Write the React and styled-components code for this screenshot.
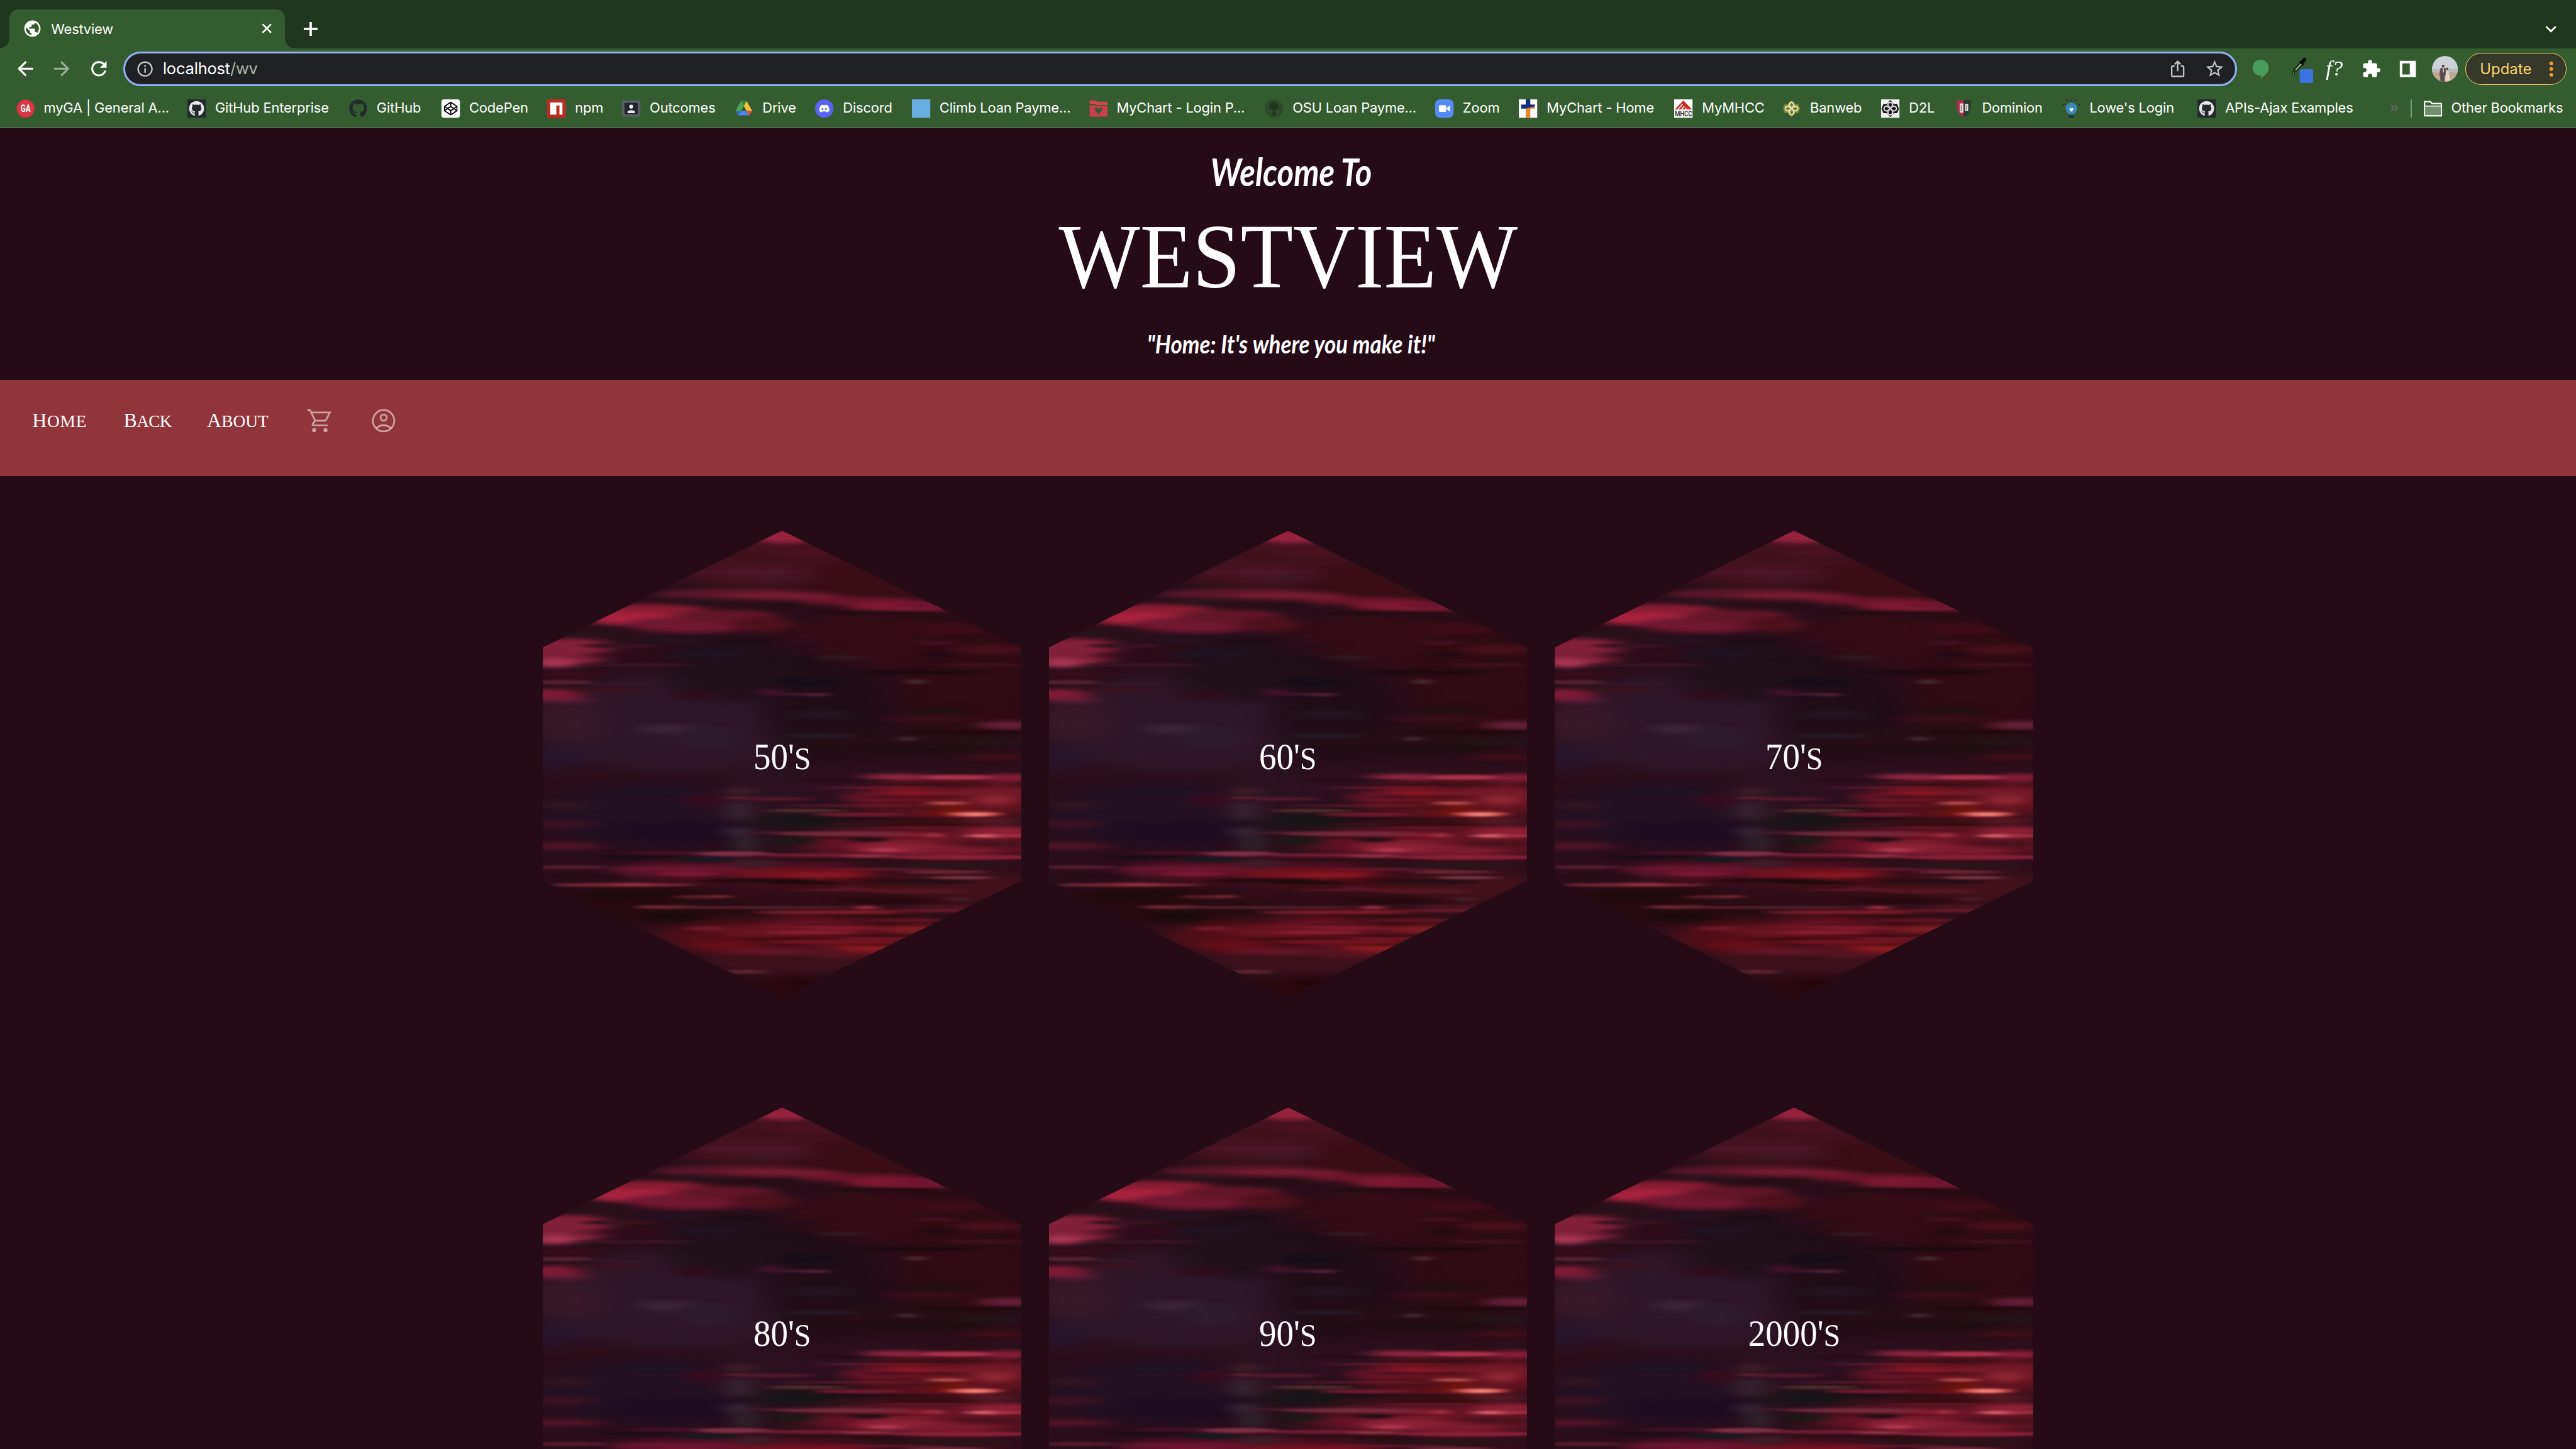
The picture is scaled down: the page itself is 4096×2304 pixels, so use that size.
import React from "react";
import styled, { createGlobalStyle } from "styled-components";
import {
  MdArrowBack,
  MdArrowForward,
  MdRefresh,
  MdInfoOutline,
  MdStarOutline,
  MdExtension,
  MdPublic,
} from "react-icons/md";
import { FaGithub, FaCodepen, FaDiscord } from "react-icons/fa";

const GlobalStyle = createGlobalStyle`
  *, *::before, *::after { box-sizing: border-box; }
  html, body { margin: 0; background: #250b16; overflow: hidden; }
`;

const ui = `Inter, Roboto, "Liberation Sans", sans-serif`;
const roman = `"Liberation Serif", "Times New Roman", serif`;
const script = `Lato, "Open Sans", sans-serif`;

const Page = styled.div`
  zoom: 1.8285714;
  width: 2240px;
  height: 1260px;
  overflow: hidden;
  display: flex;
  flex-direction: column;
  background: #250b16;
  color: #fff;
  font-family: ${ui};
`;

/* ---------- browser frame ---------- */

const TabStrip = styled.div`
  flex: none;
  height: 42px;
  padding: 8px 0 0 8px;
  display: flex;
  background: #21361e;
`;

const Tab = styled.div`
  position: relative;
  width: 240px;
  height: 34px;
  padding: 0 11.5px 0 11.5px;
  display: flex;
  align-items: center;
  gap: 8px;
  background: #355c30;
  border-radius: 8px 8px 0 0;
  font-size: 12px;
  line-height: 34px;

  &::before,
  &::after {
    content: "";
    position: absolute;
    bottom: 0;
    width: 8px;
    height: 8px;
  }
  &::before {
    left: -8px;
    background: radial-gradient(circle at 0 0, transparent 7.7px, #355c30 8.2px);
  }
  &::after {
    right: -8px;
    background: radial-gradient(circle at 100% 0, transparent 7.7px, #355c30 8.2px);
  }
`;

const TabTitle = styled.span`
  flex: 1;
  letter-spacing: -0.13px;
`;

const StripButton = styled.div`
  width: 28px;
  height: 34px;
  margin-left: ${(p) => p.$left || "0"};
  margin-right: ${(p) => p.$right || "0"};
  display: flex;
  align-items: center;
  justify-content: center;
`;

const Toolbar = styled.div`
  flex: none;
  height: 36px;
  padding: 0 8px 0 6px;
  display: flex;
  align-items: center;
  background: #355c30;
`;

const ToolSlot = styled.div`
  flex: none;
  width: 32px;
  height: 32px;
  display: flex;
  align-items: center;
  justify-content: center;
  opacity: ${(p) => (p.$dim ? 0.5 : 1)};
`;

const Omnibox = styled.div`
  width: 1838px;
  height: 30px;
  margin: 0 5px;
  padding: 0 9.5px;
  display: flex;
  align-items: center;
  background: #202124;
  border: 2px solid #93b1f5;
  border-radius: 15px;
  color: #c4c5c7;
`;

const Address = styled.span`
  flex: 1;
  margin-left: 7.5px;
  font-size: 14px;
  line-height: 20px;
  letter-spacing: -0.14px;
  color: #a9b5a6;
`;

const Host = styled.span`
  color: #fff;
`;

const OmniSlot = styled.div`
  width: 32px;
  display: flex;
  justify-content: center;
  margin-right: ${(p) => p.$right || "0"};
`;

const UpdateButton = styled.div`
  flex: none;
  width: 88px;
  height: 28px;
  margin-left: 2px;
  padding: 0 11px 0 12px;
  display: flex;
  align-items: center;
  justify-content: space-between;
  border: 1px solid #f9d56e;
  border-radius: 14px;
  background: #36382a;
  color: #f9d56e;
  font-size: 13px;
  letter-spacing: 0.05px;
`;

const BookmarkBar = styled.div`
  flex: none;
  height: 33px;
  padding: 0 0 0 14px;
  display: flex;
  align-items: center;
  background: #355c30;
  border-bottom: 1px solid #5f7f5f;
`;

const BookmarkItem = styled.div`
  flex: none;
  width: ${(p) => p.$width}px;
  display: flex;
  align-items: center;
  gap: 8px;
  font-size: 12px;
  line-height: 16px;
  white-space: nowrap;
  letter-spacing: -0.1px;

  & > svg {
    flex: none;
  }
`;

const BookmarkLabel = styled.span`
  padding-bottom: 1px;
`;

const Divider = styled.div`
  width: 1px;
  height: 16px;
  margin-right: 10px;
  background: #7b967a;
`;

/* ---------- page header ---------- */

const Banner = styled.header`
  flex: none;
  height: 219.5px;
  display: flex;
  flex-direction: column;
  align-items: center;
  white-space: nowrap;
`;

const Brush = styled.div`
  height: ${(p) => p.$height}px;
  line-height: ${(p) => p.$height}px;
  margin-top: ${(p) => p.$top}px;
  font-family: ${script};
  font-weight: 700;
  font-style: italic;
  font-size: ${(p) => p.$size}px;
  transform: translateX(${(p) => p.$shift || 0}px) scaleX(${(p) => p.$squeeze});
`;

const Title = styled.h1`
  margin: 0;
  height: 90px;
  line-height: 90px;
  margin-top: ${(p) => p.$top}px;
  font-family: ${roman};
  font-weight: 400;
  font-size: 80.5px;
  transform: scaleX(0.93);
`;

const NavBar = styled.nav`
  flex: none;
  height: 83.5px;
  padding: 23.5px 0 0 28px;
  display: flex;
  align-items: flex-start;
  background: #91353d;
`;

const NavLink = styled.a`
  display: block;
  width: ${(p) => p.$width}px;
  height: 24px;
  line-height: 24px;
  font-family: ${roman};
  font-size: 15px;
  letter-spacing: ${(p) => p.$track || 0}px;
  text-transform: uppercase;

  &::first-letter {
    font-size: 17.5px;
  }
`;

const NavIcon = styled.span`
  width: 56.5px;
  height: 24px;
  color: rgba(255, 255, 255, 0.54);
`;

/* ---------- decade tiles ---------- */

const Decades = styled.main`
  display: grid;
  grid-template-columns: repeat(3, 416px);
  grid-auto-rows: 406px;
  gap: 95.5px 24px;
  justify-content: center;
  padding-top: 47.5px;
`;

const Hexagon = styled.div`
  display: grid;
  place-items: center;
  clip-path: polygon(50% 0, 100% 25%, 100% 75%, 50% 100%, 0 75%, 0 25%);
  background: #280c18;

  & > * {
    grid-area: 1 / 1;
  }
`;

const Decade = styled.div`
  position: relative;
  margin-top: -11px;
  font-family: ${roman};
  font-size: 32px;
  line-height: 40px;
  text-transform: uppercase;
  transform: scaleX(0.94);
`;

const Suffix = styled.span`
  font-size: 28px;
`;

/* cx, cy, rx, ry, colour */
const washes = [
  [1248, 150, 700, 160, "#43111f"],
  [1800, 260, 500, 120, "#390d16"],
  [700, 1000, 750, 260, "#2d1627"],
  [1050, 720, 420, 170, "#21101a"],
  [1850, 560, 600, 130, "#340c16"],
  [2250, 800, 380, 300, "#2f0b13"],
  [1500, 950, 330, 260, "#200d17"],
  [1900, 1100, 500, 80, "#250e15"],
  [120, 1000, 160, 100, "#391a28"],
  [60, 1180, 150, 70, "#27152c"],
  [600, 1480, 650, 170, "#231122"],
  [750, 1570, 420, 60, "#1d0c21"],
  [1150, 1400, 220, 180, "#2b1220"],
  [1500, 1330, 260, 80, "#2c1020"],
  [2150, 1400, 520, 110, "#651320"],
  [2000, 1630, 660, 90, "#651426"],
  [1350, 1520, 260, 50, "#1d1518"],
  [1100, 1780, 700, 60, "#531022"],
  [1650, 1850, 500, 60, "#420c15"],
  [2200, 1860, 400, 90, "#42101b"],
  [600, 1950, 600, 100, "#260b10"],
  [1300, 1910, 500, 40, "#300c17"],
  [1000, 2120, 400, 90, "#520e18"],
  [1600, 2100, 500, 130, "#59101c"],
  [1300, 2250, 500, 60, "#3c111b"],
  [1400, 2390, 500, 60, "#2a0a0f"],
];

const streaks = [
  [1270, 30, 190, 36, "#96223f"],
  [1150, 130, 180, 22, "#3c0f18"],
  [1330, 110, 160, 22, "#4c1120"],
  [1100, 215, 300, 18, "#51152a"],
  [1230, 250, 220, 14, "#3d1825"],
  [1000, 330, 420, 26, "#5c162a"],
  [1250, 340, 320, 20, "#751b31"],
  [820, 368, 200, 14, "#26131a"],
  [1230, 390, 330, 16, "#270d14"],
  [1650, 368, 320, 20, "#6c152c"],
  [1900, 395, 320, 28, "#7d1833"],
  [2000, 388, 160, 12, "#6c1530"],
  [1770, 430, 330, 9, "#230b10"],
  [2060, 455, 200, 14, "#260c12"],
  [560, 440, 360, 58, "#8a1c33"],
  [480, 460, 260, 34, "#a8223f"],
  [780, 490, 340, 42, "#701731"],
  [950, 445, 270, 34, "#621629"],
  [1150, 490, 160, 40, "#4e101c"],
  [300, 545, 220, 16, "#271217"],
  [660, 570, 200, 16, "#241220"],
  [130, 605, 240, 44, "#841f39"],
  [120, 650, 230, 56, "#80203a"],
  [60, 690, 120, 24, "#ac3655"],
  [400, 600, 200, 12, "#37131f"],
  [450, 650, 240, 14, "#300b19"],
  [480, 700, 300, 10, "#381522"],
  [130, 750, 180, 14, "#3a0d18"],
  [100, 790, 160, 12, "#582030"],
  [40, 855, 170, 30, "#7f1b35"],
  [110, 885, 160, 14, "#641c36"],
  [320, 830, 200, 14, "#3a111c"],
  [420, 800, 180, 8, "#321827"],
  [860, 640, 200, 26, "#201221"],
  [1040, 580, 120, 12, "#1c0c14"],
  [800, 855, 110, 22, "#2d0c19"],
  [650, 1035, 140, 28, "#3b2635"],
  [850, 1080, 160, 60, "#2e1b2b"],
  [1190, 843, 46, 15, "#64173a"],
  [1350, 853, 150, 8, "#3e1830"],
  [1430, 855, 66, 8, "#55253e"],
  [1380, 790, 170, 20, "#150e1a"],
  [1300, 680, 200, 16, "#1d0e18"],
  [1560, 660, 120, 12, "#2f1920"],
  [1330, 600, 160, 16, "#270d1b"],
  [1950, 787, 50, 12, "#4c2c35"],
  [1900, 1085, 50, 12, "#3d2a31"],
  [1950, 738, 320, 12, "#1c0b10"],
  [2060, 645, 70, 12, "#1f0c14"],
  [2340, 668, 60, 14, "#240c15"],
  [2150, 515, 180, 24, "#400b18"],
  [2330, 620, 190, 26, "#480e1b"],
  [2050, 585, 110, 12, "#401120"],
  [2300, 700, 210, 10, "#3f101e"],
  [2060, 935, 160, 16, "#1d1214"],
  [2000, 980, 240, 14, "#3a0e1c"],
  [2430, 1015, 160, 22, "#68203a"],
  [2250, 1050, 320, 10, "#210a0f"],
  [2360, 1100, 230, 18, "#221417"],
  [2000, 1140, 340, 14, "#1c0e12"],
  [2380, 1180, 180, 16, "#430d17"],
  [1450, 960, 200, 26, "#221420"],
  [1450, 1070, 200, 12, "#251925"],
  [580, 1360, 220, 12, "#1d1620"],
  [120, 1430, 140, 20, "#321520"],
  [100, 1530, 160, 24, "#3a1222"],
  [850, 1400, 110, 36, "#360c1e"],
  [1030, 1360, 60, 24, "#44202a"],
  [1020, 1460, 66, 50, "#362530"],
  [1020, 1570, 66, 24, "#3b2a38"],
  [1060, 1630, 60, 50, "#32262e"],
  [1030, 1395, 75, 8, "#722936"],
  [1200, 1398, 220, 9, "#55172b"],
  [1240, 1575, 200, 7, "#451b2a"],
  [1380, 1460, 220, 8, "#54302f"],
  [1650, 1480, 240, 10, "#731b30"],
  [1340, 1510, 180, 22, "#171517"],
  [1650, 1530, 160, 10, "#361019"],
  [1570, 1580, 360, 11, "#742b3d"],
  [1300, 1620, 120, 20, "#191a17"],
  [1700, 1612, 100, 10, "#1d1116"],
  [100, 1645, 220, 20, "#501225"],
  [750, 1680, 320, 8, "#4a1029"],
  [1000, 1685, 200, 13, "#802e47"],
  [500, 1703, 220, 9, "#180e18"],
  [850, 1715, 160, 12, "#121c21"],
  [1100, 1735, 100, 22, "#3d202a"],
  [150, 1755, 200, 10, "#581a2b"],
  [700, 1765, 350, 20, "#6b1631"],
  [760, 1790, 180, 12, "#7a1838"],
  [520, 1790, 100, 14, "#50142b"],
  [200, 1805, 220, 10, "#260c15"],
  [1100, 1825, 300, 12, "#250a10"],
  [420, 1847, 380, 10, "#7c2737"],
  [470, 1845, 120, 8, "#983141"],
  [450, 1895, 250, 24, "#1e0c0d"],
  [830, 1910, 150, 9, "#5b1f28"],
  [930, 1908, 60, 7, "#7d2835"],
  [650, 1963, 170, 9, "#7a2a39"],
  [1100, 1965, 500, 7, "#562030"],
  [680, 2015, 160, 24, "#190b0c"],
  [1850, 1285, 190, 14, "#a42b4b"],
  [2160, 1286, 190, 13, "#ae314f"],
  [2430, 1288, 150, 20, "#8a1f39"],
  [2050, 1325, 300, 16, "#3a0e14"],
  [1900, 1372, 150, 26, "#861726"],
  [2300, 1370, 260, 34, "#721929"],
  [1720, 1390, 150, 24, "#68162b"],
  [2110, 1421, 105, 9, "#b44e4d"],
  [2360, 1406, 90, 24, "#932937"],
  [2100, 1455, 110, 24, "#741409"],
  [2250, 1478, 140, 13, "#d65656"],
  [2255, 1480, 70, 9, "#f58880"],
  [1900, 1440, 200, 24, "#4c111b"],
  [2050, 1530, 330, 20, "#360c10"],
  [2350, 1515, 160, 14, "#5c1b27"],
  [2400, 1565, 220, 20, "#902138"],
  [2330, 1591, 125, 10, "#da5b6b"],
  [2440, 1590, 90, 10, "#a62d42"],
  [2040, 1588, 40, 11, "#a93546"],
  [1920, 1600, 170, 22, "#881b30"],
  [1800, 1655, 180, 28, "#912239"],
  [1780, 1665, 90, 10, "#b03850"],
  [1970, 1660, 130, 26, "#92233a"],
  [2150, 1665, 220, 24, "#7c1b30"],
  [1380, 1692, 280, 8, "#771e35"],
  [1690, 1696, 140, 7, "#983649"],
  [2200, 1703, 400, 12, "#8a2039"],
  [2350, 1635, 220, 16, "#46111b"],
  [1800, 1735, 220, 14, "#270f14"],
  [2150, 1745, 300, 20, "#2a1319"],
  [2100, 1780, 220, 8, "#712a3a"],
  [2180, 1810, 170, 7, "#7f3c4d"],
  [1350, 1790, 370, 28, "#761320"],
  [1450, 1795, 200, 12, "#831823"],
  [1350, 1835, 200, 8, "#1d0a0c"],
  [1980, 1832, 280, 10, "#270d13"],
  [1950, 1880, 260, 12, "#55151f"],
  [1600, 1865, 70, 12, "#54152a"],
  [1800, 1925, 260, 14, "#250a0e"],
  [2170, 1922, 50, 9, "#43252d"],
  [2100, 1970, 200, 20, "#501420"],
  [1690, 1965, 60, 8, "#a8364a"],
  [1480, 1990, 380, 9, "#7b1d2b"],
  [1750, 2025, 200, 18, "#350c13"],
  [1430, 2065, 320, 20, "#811b2e"],
  [1400, 2095, 240, 9, "#8a1e31"],
  [1950, 2080, 160, 22, "#761e21"],
  [1150, 2090, 260, 30, "#661420"],
  [850, 2075, 100, 12, "#6f1a2c"],
  [1300, 2130, 300, 8, "#430a10"],
  [1500, 2145, 330, 12, "#701521"],
  [1720, 2175, 190, 28, "#8a1820"],
  [1000, 2165, 200, 34, "#640f1a"],
  [1250, 2150, 150, 16, "#3f0d14"],
  [1200, 2195, 240, 14, "#65182c"],
  [1550, 2210, 180, 18, "#561322"],
  [1060, 2300, 110, 12, "#5d222d"],
  [1350, 2355, 60, 20, "#220509"],
];

const softStreaks = streaks.filter((s) => s[3] >= 14);
const fineStreaks = streaks.filter((s) => s[3] < 14);

const grainRows = [1302, 1340, 1388, 1434, 1502, 1548, 1604, 1646, 1718, 1766, 1822, 1874, 1938, 1982, 2008, 2032, 2054, 2078, 2112, 2128, 2160, 2184];

const drawEllipse = ([cx, cy, rx, ry, c], i) => (
  <ellipse key={i} cx={cx} cy={cy} rx={rx} ry={ry} fill={c} />
);

function Reflection({ id }) {
  return (
    <svg width="416" height="406" viewBox="0 0 2496 2436" preserveAspectRatio="none">
      <defs>
        <filter id={`${id}-wide`} x="-50%" y="-50%" width="200%" height="200%" colorInterpolationFilters="sRGB">
          <feGaussianBlur stdDeviation="85 26" />
        </filter>
        <filter id={`${id}-soft`} x="-10%" y="-10%" width="120%" height="120%" colorInterpolationFilters="sRGB">
          <feGaussianBlur stdDeviation="52 11" />
        </filter>
        <filter id={`${id}-fine`} x="-10%" y="-10%" width="120%" height="120%" colorInterpolationFilters="sRGB">
          <feGaussianBlur stdDeviation="34 5.500" />
        </filter>
      </defs>
      <rect width="2496" height="2436" fill="#2a0e1a" />
      <g filter={`url(#${id}-wide)`}>{washes.map(drawEllipse)}</g>
      <g filter={`url(#${id}-soft)`}>{softStreaks.map(drawEllipse)}</g>
      <g filter={`url(#${id}-fine)`}>
        {grainRows.map((y, i) => (
          <ellipse
            key={`g${y}`}
            cx={1750 + ((i * 173) % 460) - 150}
            cy={y}
            rx={280 + ((i * 97) % 160)}
            ry="5"
            fill={i % 2 ? "#8c2138" : "#1c070b"}
            opacity="0.55"
          />
        ))}
        {fineStreaks.map(drawEllipse)}
      </g>
    </svg>
  );
}

/* ---------- small drawings ---------- */

const Svg = ({ children, size = 16, box = 16 }) => (
  <svg width={size} height={size} viewBox={`0 0 ${box} ${box}`} fill="none" overflow="visible">
    {children}
  </svg>
);

const GaIcon = () => (
  <Svg>
    <circle cx="8" cy="8" r="7.4" fill="#dc3545" />
    <circle cx="8" cy="8" r="7.5" stroke="#dc3545" strokeWidth="1" strokeDasharray="1 .6" />
    <text x="8" y="11.2" textAnchor="middle" fontFamily="Roboto, sans-serif" fontWeight="700" fontSize="9" fill="#fff" textLength="8.6" lengthAdjust="spacingAndGlyphs">GA</text>
  </Svg>
);

const OctoTile = () => (
  <Svg>
    <rect width="16" height="16" rx="1" fill="#24292e" />
    <FaGithub x="1.3" y="1.3" size={13.4} color="#e9e9e9" />
  </Svg>
);

const OctoIcon = () => <FaGithub size={16} color="#24292f" />;

const CodePenIcon = () => (
  <Svg>
    <rect width="16" height="16" rx="2" fill="#fff" />
    <FaCodepen x="2" y="2" size={12} color="#0b0b0b" />
  </Svg>
);

const NpmIcon = () => (
  <Svg>
    <rect width="16" height="16" fill="#bf2a1e" />
    <path d="M2.7 2.7h10.6v10.6h-2.6V5.4H8v7.9H2.7z" fill="#fff" />
  </Svg>
);

const OutcomesIcon = () => (
  <Svg>
    <rect y="1" width="16" height="14" rx="1" fill="#5b6068" />
    <rect x="2.2" y="3" width="11.6" height="10" fill="#22252b" />
    <circle cx="8" cy="6.3" r="1.7" fill="#fff" />
    <path d="M4.8 12V10.7Q5 9.5 8 9.4q3 .1 3.200 1.300V12z" fill="#e8e8e8" />
  </Svg>
);

const DriveIcon = () => (
  <Svg>
    <path d="M5.500 1.500h5L3.300 14 .8 10.100z" fill="#4ca556" />
    <path d="M5.500 1.500h5l4.900 8.600h-4.900z" fill="#f4c034" />
    <path d="M5.500 1.500h5L8 5.900z" fill="#2f8745" />
    <path d="M8 6l2.400 4.100H5.600z" fill="#355c30" />
    <path d="M.8 10.100h4.800L3.300 14z" fill="#2f68d4" />
    <path d="M5.600 10.100h4.900l2.200 3.900H3.300z" fill="#4d85ee" />
    <path d="M10.500 10.100h4.900L12.700 14z" fill="#e5493a" />
  </Svg>
);

const DiscordIcon = () => (
  <Svg>
    <circle cx="8" cy="8" r="8" fill="#5865f2" />
    <FaDiscord x="3.200" y="3.200" size={9.600} color="#fff" />
  </Svg>
);

const ClimbIcon = () => (
  <Svg>
    <rect width="16" height="16" fill="#68aee0" />
  </Svg>
);

const ChartFolderIcon = () => (
  <Svg>
    <path d="M.3 1h5.800l.7 1h9v3H6.400L5.600 4H.3z" fill="#d5434f" />
    <path d="M.3 5h5l.8 1h9.700v8.500q0 .5-.5.500H.8q-.5 0-.5-.5z" fill="#c93f4d" />
    <path d="M8 12.800L5.200 9.700Q4.300 8 5.900 7.300 7.200 7 8 8.300q.8-1.300 2.100-1 1.600.7.700 2.400z" fill="#355c30" />
  </Svg>
);

const OsuIcon = () => (
  <Svg>
    <circle cx="8" cy="8" r="8" fill="#2d4a2b" />
    <path d="M8 2.500q4 .5 4.200 4-.4 2.600-3.500 3L9 13l1.500.8h-5L7 13l.2-3.500Q4 9 3.800 6.500q.2-3.500 4.200-4z" fill="#213420" />
  </Svg>
);

const ZoomIcon = () => (
  <Svg>
    <rect width="16" height="16" rx="4" fill="#548bf6" />
    <rect x="3.200" y="5" width="6.500" height="6" rx="1.300" fill="#fff" />
    <path d="M10.300 7.200L13 5.300v5.400l-2.700-1.900z" fill="#fff" />
  </Svg>
);

const CrossIcon = () => (
  <Svg>
    <rect width="16" height="16" fill="#fff" />
    <path d="M6 0h4v4.500h4V7L9.500 8H2V4.500h4z" fill="#13317f" />
    <path d="M6 8.500L10 7l4-.8V8h-4v8H6z" fill="#e8862c" />
  </Svg>
);

const MhccIcon = () => (
  <Svg>
    <rect width="16" height="16" fill="#fff" />
    <path d="M.5 8.800L8 1l7.500 7.800z" fill="#cf2a24" />
    <path d="M3 9l4.500-5M6.300 9l2.400-3M9.500 9l.9-1.500" stroke="#fff" strokeWidth=".9" />
    <text x="8" y="15" textAnchor="middle" fontFamily="Roboto, sans-serif" fontWeight="700" fontSize="6.500" fill="#444" textLength="15" lengthAdjust="spacingAndGlyphs">MHCC</text>
  </Svg>
);

const Knot = ({ stroke, back }) => (
  <>
    <path d="M8 .5l3 3.500h3l1.500 4L14 12h-3l-3 3.500L5 12H2L.5 8 2 4h3z" fill={back} />
    <path d="M8 13.500Q5.500 13 6 10.500L9.900 5.500Q10.500 3 8 2.500 5.700 3 6 5.300L10 10.300M2.500 8Q3 5.700 5.300 6l5.200 4q2.500.3 3-2-.5-2.300-3-2L5.500 10.100Q3 10.300 2.500 8M10 10.400q.3 2.600-2 3.100" stroke={stroke} strokeWidth="1.200" />
  </>
);

const BanwebIcon = () => (
  <Svg>
    <Knot stroke="#e3e4b6" back="#7d8430" />
  </Svg>
);

const D2lIcon = () => (
  <Svg>
    <rect width="16" height="16" fill="#f2f2f2" />
    <Knot stroke="#d6d6d6" back="#151515" />
  </Svg>
);

const DominionIcon = () => (
  <Svg>
    <path d="M1.500.5H8v15Q3 13.500 2.300 8z" fill="#a8304a" />
    <path d="M8 .5h6.500L13.700 8Q13 13.500 8 15.500z" fill="#2b3a33" />
    <path d="M4.500 3.500h3v8h-3zM9 4h2.800v6H9z" fill="#e5e1e0" />
    <path d="M5.700 5v5M10.400 5v4" stroke="#6d6466" strokeWidth=".7" />
  </Svg>
);

const BulbIcon = () => (
  <Svg>
    <path d="M8 3Q13 3.300 13 8q-.5 3-3 4.800H6Q3.500 11 3 8q0-4.700 5-5z" fill="#3c88ba" />
    <path d="M6.200 7.800h3.600L8.700 10.500H7.300z" fill="#fff" />
    <rect x="6" y="14" width="4" height="2" fill="#12304a" />
    <path d="M3.800 0l.8 1.400M7.900 0v1.200M12.200 0l-.8 1.400M.5 4.300l1.300.8M15.500 4.300l-1.300.8" stroke="#12304a" strokeWidth="1.200" />
  </Svg>
);

const FolderIcon = () => (
  <Svg>
    <path d="M.7 2h5l1.400 1.600h8.200v10.700H.7z" fill="#355c30" stroke="#fff" strokeWidth="1.200" />
    <rect x="1.300" y="6" width="13.400" height="7.700" fill="#718f6e" />
    <path d="M.7 5.800h14.600" stroke="#fff" strokeWidth=".9" />
  </Svg>
);

const bookmarks = [
  ["myGA | General A...", GaIcon, 149],
  ["GitHub Enterprise", OctoTile, 140.5],
  ["GitHub", OctoIcon, 80.5],
  ["CodePen", CodePenIcon, 92],
  ["npm", NpmIcon, 65],
  ["Outcomes", OutcomesIcon, 98],
  ["Drive", DriveIcon, 70],
  ["Discord", DiscordIcon, 84],
  ["Climb Loan Payme...", ClimbIcon, 154],
  ["MyChart - Login P...", ChartFolderIcon, 153],
  ["OSU Loan Payme...", OsuIcon, 148],
  ["Zoom", ZoomIcon, 73],
  ["MyChart - Home", CrossIcon, 135],
  ["MyMHCC", MhccIcon, 94],
  ["Banweb", BanwebIcon, 86],
  ["D2L", D2lIcon, 63.5],
  ["Dominion", DominionIcon, 93.5],
  ["Lowe's Login", BulbIcon, 118],
  ["APIs-Ajax Examples", OctoTile, 167.5],
];

const CloseIcon = () => (
  <Svg size={9} box={9}>
    <path d="M.8.8l7.400 7.400M8.200.8L.8 8.200" stroke="#fff" strokeWidth="1.400" />
  </Svg>
);

const PlusIcon = () => (
  <Svg size={12} box={12}>
    <path d="M6 0v12M0 6h12" stroke="#fff" strokeWidth="2" />
  </Svg>
);

const ChevronIcon = () => (
  <Svg size={10} box={10}>
    <path d="M.8 2.800L5 7l4.200-4.200" stroke="#fff" strokeWidth="1.500" />
  </Svg>
);

const ShareIcon = () => (
  <Svg>
    <path d="M5.300 5.500H3.800q-1 0-1 1v7q0 1 1 1h8.400q1 0 1-1v-7q0-1-1-1h-1.500M8 10V1.800M5.400 4L8 1.400 10.600 4" stroke="#c4c5c7" strokeWidth="1.300" />
  </Svg>
);

const BalloonIcon = () => (
  <Svg>
    <path d="M8 0a7 7 0 0 1 7 7c0 4-3 6.500-6.700 9v-2.200A6.900 6.900 0 0 1 1 7a7 7 0 0 1 7-7z" fill="#4a9d61" />
  </Svg>
);

const DropperSlot = styled(ToolSlot)`
  padding: 2px 0 0 7px;
`;

const DropperIcon = () => (
  <svg width="20" height="24" viewBox="0 0 20 24" fill="none">
    <path d="M3.200 11.300L9 5.200l1.500 1.500-5.700 6z" fill="#8fc590" stroke="#0c130c" strokeWidth=".9" />
    <path d="M8.200 4l1.200-.4Q11 .8 12.600 1q1.600.5 1 2.300-.4 1.100-2.200 2.200l.2 1.800-1 .5-3-3z" fill="#0a0a0a" />
    <path d="M2.500 12.600q-1.600 2.200-.9 3.200.9.700 1.800 0 .7-1-.9-3.200z" fill="#3f9b46" stroke="#0c130c" strokeWidth=".6" />
    <rect x="8" y="11" width="12" height="12" rx="2" fill="#3a72e0" />
  </svg>
);

const FormulaText = styled.span`
  font: italic 400 18px/20px ${roman};
  transform: scaleX(1.05);
`;

const PanelIcon = () => (
  <Svg>
    <path fillRule="evenodd" d="M1 1h14v14H1zM3.200 3.200v9.600h6.500V3.200z" fill="#fff" />
  </Svg>
);

const Avatar = () => (
  <svg width="22.500" height="22.500" viewBox="0 0 22 22">
    <defs>
      <clipPath id="face">
        <circle cx="11" cy="11" r="11" />
      </clipPath>
    </defs>
    <g clipPath="url(#face)">
      <rect width="22" height="22" fill="#cdd2d8" />
      <rect y="11" width="22" height="3.500" fill="#b9bdbd" />
      <rect y="14" width="22" height="8" fill="#bda78f" />
      <circle cx="9.500" cy="8.600" r="1.100" fill="#4c3a35" />
      <path d="M7.200 10.500q2.300-1.300 4.400 0l.3 6h-1L10.500 22H7.200L7 17l-.8-.5z" fill="#594b4f" />
      <path d="M9.200 10h.8v4h-.8z" fill="#eee" />
      <circle cx="12.800" cy="11" r="1.100" fill="#6b4638" />
      <path d="M11.800 12.800q1-.7 2.200 0l1.800 8.200h-4.500z" fill="#e2d3cb" />
    </g>
  </svg>
);

const DotsIcon = () => (
  <svg width="4" height="14" viewBox="0 0 4 14" fill="#e99f35">
    <circle cx="2" cy="2" r="1.600" />
    <circle cx="2" cy="7" r="1.600" />
    <circle cx="2" cy="12" r="1.600" />
  </svg>
);

const MoreIcon = () => (
  <svg width="7" height="7" viewBox="0 0 7 7" fill="none">
    <path d="M.6.6l2.500 2.700L.6 6M3.700.6l2.500 2.700L3.700 6" stroke="#66626c" strokeWidth="1.200" />
  </svg>
);

const MoreSlot = styled.div`
  width: 18px;
  display: flex;
`;

const CartIcon = () => (
  <Svg size={24} box={24}>
    <path d="M2 2.700h2.300l4.500 9.200h8.500q.7 0 1.100-.7l3.200-6.400H5.300M8.800 11.900L6.600 15q-.3 1 .7 1h12.500" stroke="currentColor" strokeWidth="1.500" />
    <circle cx="7.900" cy="20.200" r="1.800" fill="currentColor" />
    <circle cx="17.800" cy="20.200" r="1.800" fill="currentColor" />
  </Svg>
);

const AccountIcon = () => (
  <Svg size={24} box={24}>
    <circle cx="12" cy="12" r="9.300" stroke="currentColor" strokeWidth="1.500" />
    <circle cx="12" cy="9.300" r="2.700" stroke="currentColor" strokeWidth="1.500" />
    <path d="M5.600 18.500q6.400-5.300 12.800 0" stroke="currentColor" strokeWidth="1.500" />
  </Svg>
);

const decades = ["50", "60", "70", "80", "90", "2000"];

export default function App() {
  return (
    <Page>
      <GlobalStyle />
      <TabStrip>
        <Tab>
          <MdPublic size={17} />
          <TabTitle>Westview</TabTitle>
          <CloseIcon />
        </Tab>
        <StripButton $left="8px">
          <PlusIcon />
        </StripButton>
        <StripButton $left="auto" $right="8px">
          <ChevronIcon />
        </StripButton>
      </TabStrip>

      <Toolbar>
        <ToolSlot><MdArrowBack size={20} /></ToolSlot>
        <ToolSlot $dim><MdArrowForward size={20} /></ToolSlot>
        <ToolSlot><MdRefresh size={20} /></ToolSlot>
        <Omnibox>
          <MdInfoOutline size={16} />
          <Address><Host>localhost</Host>/wv</Address>
          <OmniSlot><ShareIcon /></OmniSlot>
          <OmniSlot $right="-8px"><MdStarOutline size={18} /></OmniSlot>
        </Omnibox>
        <ToolSlot><BalloonIcon /></ToolSlot>
        <DropperSlot><DropperIcon /></DropperSlot>
        <ToolSlot><FormulaText>f?</FormulaText></ToolSlot>
        <ToolSlot><MdExtension size={17} /></ToolSlot>
        <ToolSlot><PanelIcon /></ToolSlot>
        <ToolSlot><Avatar /></ToolSlot>
        <UpdateButton>
          Update
          <DotsIcon />
        </UpdateButton>
      </Toolbar>

      <BookmarkBar>
        {bookmarks.map(([label, Icon, width]) => (
          <BookmarkItem key={label} $width={width}>
            <Icon />
            <BookmarkLabel>{label}</BookmarkLabel>
          </BookmarkItem>
        ))}
        <MoreSlot><MoreIcon /></MoreSlot>
        <Divider />
        <BookmarkItem $width={124}>
          <FolderIcon />
          <BookmarkLabel>Other Bookmarks</BookmarkLabel>
        </BookmarkItem>
      </BookmarkBar>

      <Banner>
        <Brush $top={17.5} $height={42} $size={33.5} $squeeze={0.83} $shift={3}>Welcome To</Brush>
        <Title $top={8}>WESTVIEW</Title>
        <Brush $top={15} $height={32} $size={21.500} $squeeze={0.89} $shift={2.5}>"Home: It's where you make it!"</Brush>
      </Banner>

      <NavBar>
        <NavLink $width={79.500} $track={0.4}>Home</NavLink>
        <NavLink $width={72.500} $track={-0.4}>Back</NavLink>
        <NavLink $width={85}>About</NavLink>
        <NavIcon><CartIcon /></NavIcon>
        <NavIcon><AccountIcon /></NavIcon>
      </NavBar>

      <Decades>
        {decades.map((d) => (
          <Hexagon key={d}>
            <Reflection id={`r${d}`} />
            <Decade>{d}'<Suffix>s</Suffix></Decade>
          </Hexagon>
        ))}
      </Decades>
    </Page>
  );
}
